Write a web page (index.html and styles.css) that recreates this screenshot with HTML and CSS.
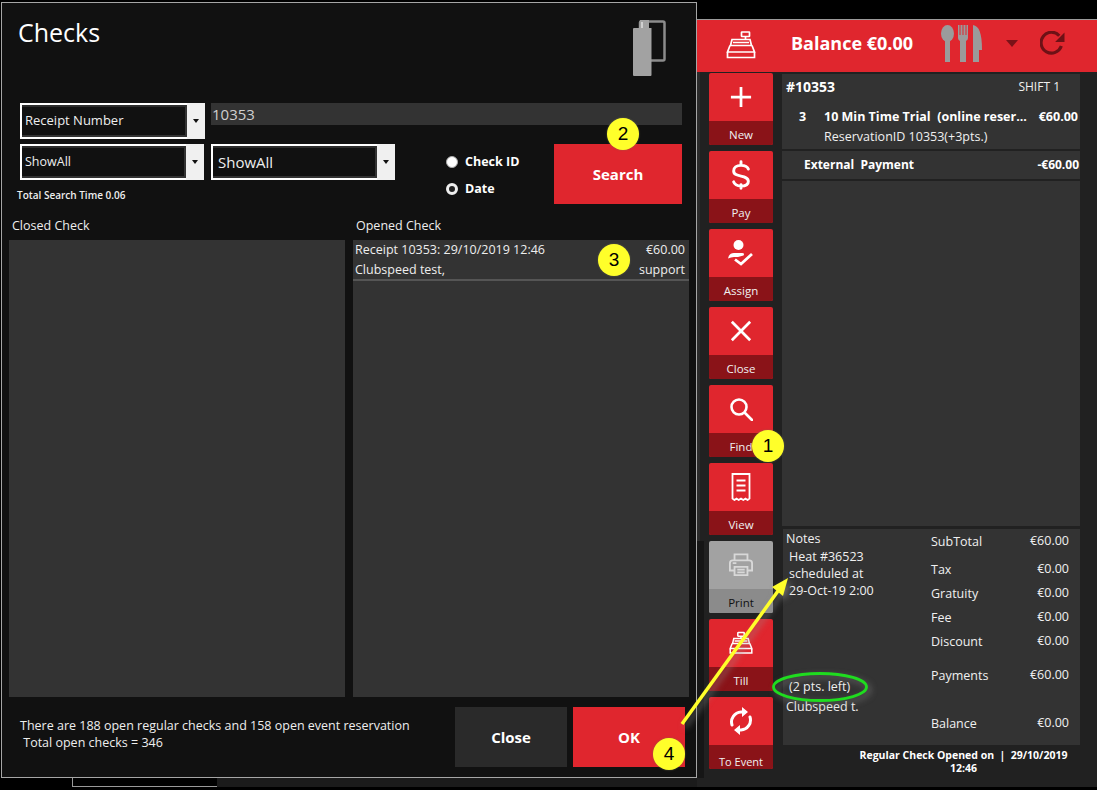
FILE: index.html
```html
<!DOCTYPE html>
<html lang="en">
<head>
<meta charset="utf-8">
<title>Checks</title>
<link rel="stylesheet" href="styles.css">
</head>
<body>
<div class="rear-window"></div>
<div class="rear-frame"></div>

<section class="pos">
  <header class="pos-head">
    <svg class="reg-icon" viewBox="0 0 30 28" fill="none" stroke="#fff" stroke-width="1.7"><rect x="15.5" y="1" width="8" height="4.5" rx=".5"/><path d="M19.5 5.5v3M6 8.5h18l1.500 6h-21zM4 14.500 1.500 21h27L26 14.500M1.500 21v5.500h27V21M7 11.500h16"/></svg>
    <span class="balance">Balance €0.00</span>
    <svg class="cutlery" viewBox="0 0 41 37" fill="#9b9b9b"><ellipse cx="6.500" cy="8.500" rx="6.500" ry="8.500"/><rect x="4" y="12" width="5" height="25"/><path d="M17 0h1.500v10h1V0h2v10h1V0h2v10h1V0H27v13q0 2-2 3v21h-6V16q-2-1-2-3zM32 0C38 1 41 8 41 25h-3v12h-6z"/></svg>
    <svg class="caret-ic" viewBox="0 0 12 7" fill="#7a1218"><path d="M0 0h12L6 7z"/></svg>
    <svg class="refresh-ic" viewBox="0 0 24 24" fill="none" stroke="#6e1116" stroke-width="3"><path d="M20.500 14.500A10 10 0 1 1 18.500 4.500"/><path d="M23.500 1.500v9h-9z" fill="#6e1116" stroke="none"/></svg>
  </header>
  <div class="pos-body">
    <nav class="rail">
      <div class="tile"><div class="tile-ic"><svg class="ic-22" viewBox="0 0 24 24" fill="none" stroke="#fff" stroke-width="3"><path d="M12 1v22M1 12h22"/></svg></div><div class="tile-lb">New</div></div>
      <div class="tile"><div class="tile-ic"><svg class="ic-dollar" viewBox="0 0 24 32" fill="none" stroke="#fff" stroke-width="3.200" stroke-linecap="round"><path d="M12 1.500v4M12 26.500v4M20 9.500C19 6.500 16 5.500 12 5.500 7 5.500 4 8 4 11.500c0 8 16 3.500 16 11.500 0 3-3 5-8 5-4 0-7-1.500-8-4.500"/></svg></div><div class="tile-lb">Pay</div></div>
      <div class="tile"><div class="tile-ic"><svg class="ic-26" viewBox="0 0 26 26" fill="none" stroke="#fff" stroke-width="2.800"><circle cx="10.500" cy="5" r="5" fill="#fff" stroke="none"/><path d="M0 18.500Q1 13 6 13h8q3 0 1.500 2.500L10 17H6q-3 0-6 1.500z" fill="#fff" stroke="none"/><path d="M7 19.500l6 4.500 11-10"/></svg></div><div class="tile-lb">Assign</div></div>
      <div class="tile"><div class="tile-ic"><svg class="ic-22" viewBox="0 0 24 24" fill="none" stroke="#fff" stroke-width="3"><path d="M2 2l20 20M22 2L2 22"/></svg></div><div class="tile-lb">Close</div></div>
      <div class="tile"><div class="tile-ic"><svg class="ic-24" viewBox="0 0 24 24" fill="none" stroke="#fff" stroke-width="2.600"><circle cx="10" cy="10" r="7.500"/><path d="M16 16l7 7" stroke-linecap="round"/></svg></div><div class="tile-lb">Find</div></div>
      <div class="tile"><div class="tile-ic"><svg class="ic-view" viewBox="0 0 20 28" fill="none" stroke="#fff" stroke-width="1.800"><path d="M1.500 1h17v24.500l-2 1.500-2-1.500-2.200 1.500-2.300-1.500L7.700 27l-2.200-1.500L3.500 27l-2-1.500zM5.500 7.500h9M5.500 12.500h9M5.500 17.500h9"/></svg></div><div class="tile-lb">View</div></div>
      <div class="tile tile-off"><div class="tile-ic"><svg class="ic-24" viewBox="0 0 26 26" fill="none" stroke="#d8d8d8" stroke-width="2"><path d="M6 8V1.500h14V8M6 19H1V11q0-3 3-3h18q3 0 3 3v8h-5"/><path d="M6 15h14v9H6zM9 18h8M9 21h8M4 11h4"/></svg></div><div class="tile-lb">Print</div></div>
      <div class="tile"><div class="tile-ic"><svg class="ic-24" viewBox="0 0 30 28" fill="none" stroke="#fff" stroke-width="1.900"><rect x="11" y="1" width="8" height="4.500" rx=".5"/><path d="M15 5.500v3M6 8.500h18l1.500 6h-21zM4 14.500 1.500 21h27L26 14.500M1.500 21v5.500h27V21M7 11.500h16"/></svg></div><div class="tile-lb">Till</div></div>
      <div class="tile"><div class="tile-ic"><svg class="ic-event" viewBox="0 0 24 28" fill="none" stroke="#fff" stroke-width="3" stroke-linecap="round"><path d="M3 18A10 10 0 0 1 12 5h2M21 10a10 10 0 0 1-9 13h-2"/><path d="M13 0l6 5-6 5zM11 18l-6 5 6 5z" fill="#fff" stroke="none"/></svg></div><div class="tile-lb tile-lb-small">To Event</div></div>
    </nav>
    <div class="ticket">
      <div class="block block-order">
        <div class="order-top"><strong class="order-no">#10353</strong><span class="shift">SHIFT 1</span></div>
        <div class="order-line"><strong class="qty">3</strong><strong class="item">10 Min Time Trial&nbsp; (online reser...</strong><strong class="price">€60.00</strong></div>
        <div class="order-sub">ReservationID 10353(+3pts.)</div>
      </div>
      <div class="block block-pay"><strong>External&nbsp; Payment</strong><strong>-€60.00</strong></div>
      <div class="block block-empty"></div>
      <div class="block block-sum">
        <div class="notes">
          <div class="notes-head">Notes</div>
          <div class="notes-in">Heat #36523</div>
          <div class="notes-in">scheduled at</div>
          <div class="notes-in">29-Oct-19 2:00</div>
          <div class="notes-in notes-pts">(2 pts. left)</div>
          <div class="notes-name">Clubspeed t.</div>
        </div>
        <div class="sums">
          <div class="sum sum-a"><span>SubTotal</span><span>€60.00</span></div>
          <div class="sum sum-b"><span>Tax</span><span>€0.00</span></div>
          <div class="sum"><span>Gratuity</span><span>€0.00</span></div>
          <div class="sum"><span>Fee</span><span>€0.00</span></div>
          <div class="sum"><span>Discount</span><span>€0.00</span></div>
          <div class="sum sum-c"><span>Payments</span><span>€60.00</span></div>
          <div class="sum sum-d"><span>Balance</span><span>€0.00</span></div>
        </div>
      </div>
      <div class="status">Regular Check Opened on&nbsp; |&nbsp; 29/10/2019<br>12:46</div>
    </div>
  </div>
</section>
<div class="shade-top"></div>
<div class="shade-low"></div>

<section class="dialog">
  <header class="dlg-head">
    <h1 class="dlg-title">Checks</h1>
    <svg class="dlg-icon" viewBox="0 0 33 56" fill="none"><path d="M7 8V2.500q0-1 1-1h22q1.500 0 1.500 1.500v36q0 1.500-1.500 1.500H17" stroke="#8c8c8c" stroke-width="2.500"/><path d="M7 0h9v8h2.500v47q0 1-1 1H1q-1 0-1-1V9q0-1 1-1h5z" fill="#a2a2a2"/><rect x="8" y="2" width="2" height="6" fill="#d0d0d0"/></svg>
  </header>
  <div class="form">
    <div class="select sel-wide"><span class="sel-text sel-text-a">Receipt Number</span><span class="sel-btn"><i class="sel-caret"></i></span></div>
    <div class="search-in">10353</div>
    <div class="select sel-left"><span class="sel-text sel-text-c">ShowAll</span><span class="sel-btn"><i class="sel-caret"></i></span></div>
    <div class="select sel-right"><span class="sel-text sel-text-b">ShowAll</span><span class="sel-btn"><i class="sel-caret"></i></span></div>
    <div class="radios">
      <div class="radio"><i class="dot dot-on"></i><strong>Check ID</strong></div>
      <div class="radio"><i class="dot dot-off"></i><strong>Date</strong></div>
    </div>
    <button class="btn btn-red btn-search">Search</button>
    <div class="time">Total Search Time 0.06</div>
  </div>
  <div class="lists">
    <div class="list-col">
      <div class="list-label">Closed Check</div>
      <div class="list-box"></div>
    </div>
    <div class="list-col">
      <div class="list-label">Opened Check</div>
      <div class="list-box">
        <div class="check-row">
          <div class="check-line"><span>Receipt 10353: 29/10/2019 12:46</span><span>€60.00</span></div>
          <div class="check-line"><span>Clubspeed test,</span><span>support</span></div>
        </div>
      </div>
    </div>
  </div>
  <footer class="dlg-foot">
    <div class="foot-text">There are 188 open regular checks and 158 open event reservation<br>&nbsp;Total open checks = 346</div>
    <button class="btn btn-dark">Close</button>
    <button class="btn btn-red">OK</button>
  </footer>
</section>

<svg class="marks" viewBox="0 0 1097 790" fill="none">
  <g class="marks-shadow">
    <path d="M682 724 778 591" stroke="#ffff2a" stroke-width="3.500"/>
    <path d="M788 578 783 596 772 587z" fill="#ffff2a"/>
    <ellipse cx="820" cy="687" rx="46.500" ry="13.500" stroke="#1fdc1f" stroke-width="2.800"/>
  </g>
</svg>
<span class="pin pin-1">1</span>
<span class="pin pin-2">2</span>
<span class="pin pin-3">3</span>
<span class="pin pin-4">4</span>
</body>
</html>
```
FILE: styles.css
```css
* { box-sizing: border-box; }
html, body { margin: 0; height: 100%; }
body {
  position: relative;
  width: 1097px;
  height: 790px;
  overflow: hidden;
  background: #000;
  color: #f0f0f0;
  font: 12.500px/1.2 "Open Sans", "Noto Sans", sans-serif;
}
strong { font-weight: 700; }

.rear-window { position: absolute; left: 217px; top: 700px; width: 500px; height: 87px; background: #1b1b1b; }
.rear-frame { position: absolute; left: 72px; top: 700px; width: 145px; height: 87px; border-left: 1px solid #999; border-bottom: 1px solid #999; }

/* POS window */
.pos { position: absolute; left: 697px; top: 19px; width: 400px; height: 768px; background: #212121; border-top: 1px solid #9a9a9a; display: flex; flex-direction: column; }
.pos-head { height: 52px; padding-bottom: 5px; background: #e0262e; display: flex; align-items: center; flex: none; }
.reg-icon { width: 30px; height: 28px; margin: 3px 0 0 29px; flex: none; }
.balance { margin-left: 35px; width: 150px; font-size: 18px; font-weight: 700; color: #fff; white-space: nowrap; }
.cutlery { width: 41px; height: 37px; flex: none; }
.caret-ic { width: 12px; height: 7px; margin-left: 24px; flex: none; }
.refresh-ic { width: 25px; height: 25px; margin-left: 22px; flex: none; }
.pos-body { display: flex; padding-left: 12px; flex: 1; min-height: 0; }
.rail { width: 64px; padding-top: 1px; display: flex; flex-direction: column; gap: 6px; flex: none; }
.tile { height: 72px; border-radius: 2px; overflow: hidden; background: #e0262e; display: flex; flex-direction: column; flex: none; }
.tile-ic { height: 48px; display: flex; align-items: center; justify-content: center; }
.ic-22 { width: 22px; height: 22px; }
.ic-24 { width: 24px; height: 24px; }
.ic-26 { width: 26px; height: 26px; }
.ic-dollar { width: 22px; height: 32px; }
.ic-view { width: 20px; height: 28px; }
.ic-event { width: 24px; height: 28px; }
.tile-lb { height: 24px; padding-top: 6px; background: #8a1318; text-align: center; font-size: 11.500px; line-height: 15px; color: #f0f0f0; }
.tile-lb-small { font-size: 11px; padding-top: 9px; }
.tile-off { background: #a2a2a2; }
.tile-off .tile-lb { background: #8b8b8b; color: #111; }
.ticket { margin-left: 9px; width: 298px; padding-top: 2px; display: flex; flex-direction: column; gap: 2px; }
.block { background: #333; flex: none; }
.block-order { height: 75px; padding: 4px 2px 0 4px; }
.order-top { display: flex; justify-content: space-between; align-items: center; height: 18px; padding-right: 18px; }
.order-no { font-size: 14px; color: #fff; }
.shift { font-size: 12px; }
.order-line { display: flex; margin-top: 13px; font-size: 12.500px; color: #fff; white-space: nowrap; }
.qty { width: 38px; padding-left: 13px; }
.item { flex: 1; }
.order-sub { padding-left: 38px; margin-top: 5px; }
.block-pay { height: 28px; padding: 1px 1px 0 22px; display: flex; justify-content: space-between; align-items: center; color: #fff; font-size: 12px; }
.block-empty { height: 345px; margin-bottom: 1px; }
.block-sum { height: 216px; margin-left: 1px; display: flex; }
.notes { width: 148px; padding: 2px 0 0 3px; flex: none; }
.notes-head { line-height: 16px; height: 17px; }
.notes-in { padding-left: 3px; line-height: 17px; }
.notes-pts { margin-top: 79px; }
.notes-name { margin-top: 3px; line-height: 17px; }
.sums { flex: 1; padding: 3px 11px 0 0; }
.sum { display: flex; justify-content: space-between; height: 24px; line-height: 18px; }
.sum span:first-child { padding-top: 1px; }
.sum-a { height: 28px; }
.sum-c { height: 48px; margin-top: 10px; }
.status { margin-top: 2px; padding-left: 65px; text-align: center; font-size: 10.500px; font-weight: 700; line-height: 13px; color: #fff; white-space: nowrap; width: 298px; }

.shade-top { position: absolute; left: 697px; top: 72px; width: 3px; height: 469px; background: #2b2b2b; }
.shade-low { position: absolute; left: 697px; top: 541px; width: 7px; height: 237px; background: #161616; }

/* Dialog */
.dialog { position: absolute; left: 1px; top: 2px; width: 696px; height: 776px; background: #111; border: 1px solid #a6a6a6; display: flex; flex-direction: column; color: #eee; }
.dlg-head { height: 100px; padding: 14px 30px 0 16px; display: flex; justify-content: space-between; align-items: flex-start; flex: none; }
.dlg-title { margin: 0; font-size: 25px; line-height: 30px; font-weight: 400; color: #fff; }
.dlg-icon { width: 33px; height: 56px; margin-top: 3px; flex: none; }
.form { display: grid; grid-template-columns: 191px 184px 159px 128px; row-gap: 5px; grid-template-rows: 36px 36px 19px; margin-left: 18px; flex: none; }
.select { width: 184px; height: 36px; display: flex; border: 2px solid #fff; border-right: 0; background: #111; }
.sel-wide { width: 185px; grid-column: 1; grid-row: 1; }
.sel-left { grid-column: 1; grid-row: 2; }
.sel-right { grid-column: 2; grid-row: 2; }
.sel-text { flex: 1; display: flex; align-items: center; padding-left: 3px; border: 2px solid #333; border-left: 0; border-top-color: #2c2c2c; color: #eee; white-space: nowrap; }
.sel-text-a { font-size: 13px; }
.sel-text-b { font-size: 15px; padding-left: 5px; }
.sel-text-c { font-size: 12.500px; padding-bottom: 2px; }
.sel-btn { width: 18px; margin: -2px 0; background: #f0f0f0; display: flex; align-items: center; justify-content: center; flex: none; }
.sel-caret { width: 0; height: 0; border: 3.500px solid transparent; border-top: 4px solid #111; border-bottom: 0; }
.search-in { grid-column: 2 / 5; grid-row: 1; height: 22px; padding-left: 1px; background: #333; color: #cfcfcf; font-size: 15px; line-height: 22px; }
.radios { grid-column: 3; grid-row: 2 / 4; padding: 9px 0 0 51px; display: flex; flex-direction: column; gap: 10px; }
.radio { display: flex; align-items: center; gap: 7px; height: 17px; font-size: 12.500px; color: #fff; white-space: nowrap; }
.dot { width: 12px; height: 12px; border-radius: 50%; flex: none; }
.dot-on { background: #fff; border: 1px solid #aaa; }
.dot-off { background: #222; border: 3px solid #eee; }
.btn-search { grid-column: 4; grid-row: 2 / 4; width: 128px; height: 60px; }
.time { grid-column: 1; grid-row: 3; margin-left: -3px; font-size: 10px; font-weight: 600; line-height: 20px; white-space: nowrap; }
.btn { border: 0; padding: 0; color: #fff; font: 700 15px "Open Sans", "Noto Sans", sans-serif; }
.btn-red { background: #e0262e; }
.btn-dark { background: #2a2a2a; }
.lists { display: grid; grid-template-columns: 336px 336px; column-gap: 8px; margin: 0 0 0 7px; flex: none; }
.list-col { display: flex; flex-direction: column; }
.list-label { height: 36px; padding: 14px 0 0 3px; line-height: 16px; }
.list-box { height: 457px; background: #333; }
.check-row { height: 41px; padding: 0 4px 0 2px; border-bottom: 2px solid #555; }
.check-line { display: flex; justify-content: space-between; height: 20px; line-height: 20px; }
.dlg-foot { flex: 1; display: flex; padding: 10px 11px 0 18px; }
.dlg-foot .btn { width: 112px; height: 60px; flex: none; }
.dlg-foot .btn-dark { margin-right: 6px; }
.foot-text { flex: 1; padding-top: 10px; line-height: 17px; white-space: nowrap; }

/* Annotations */
.marks { position: absolute; left: 0; top: 0; width: 1097px; height: 790px; pointer-events: none; }
.marks-shadow { filter: drop-shadow(3px 3px 3px rgba(150,150,150,.55)); }
.pin { position: absolute; width: 32px; height: 32px; border-radius: 50%; background: #ffff2a; color: #000; font: 19px/32px "Liberation Sans", sans-serif; text-align: center; box-shadow: 0 0 2px rgba(120,120,80,.7); }
.pin-1 { left: 752px; top: 430px; }
.pin-2 { left: 607px; top: 118px; }
.pin-3 { left: 598px; top: 244px; }
.pin-4 { left: 653px; top: 738px; }
```
